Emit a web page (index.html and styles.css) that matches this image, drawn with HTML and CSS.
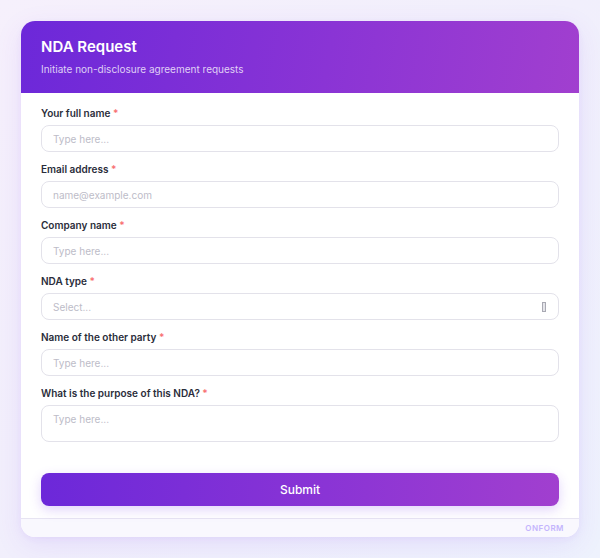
FILE: index.html
```html
<!DOCTYPE html>
<html>
<head>
<meta charset="utf-8">
<link rel="stylesheet" href="styles.css">
</head>
<body>
<div class="card">
  <div class="header">
    <div class="title">NDA Request</div>
    <div class="subtitle">Initiate non-disclosure agreement requests</div>
  </div>
  <form class="body">
    <div class="field">
      <label class="label">Your full name <span class="req">*</span></label>
      <input class="input" type="text" placeholder="Type here...">
    </div>
    <div class="field">
      <label class="label">Email address <span class="req">*</span></label>
      <input class="input" type="text" placeholder="name@example.com">
    </div>
    <div class="field">
      <label class="label">Company name <span class="req">*</span></label>
      <input class="input" type="text" placeholder="Type here...">
    </div>
    <div class="field">
      <label class="label">NDA type <span class="req">*</span></label>
      <div class="input select"><span class="ph">Select...</span><span class="tofu"></span></div>
    </div>
    <div class="field">
      <label class="label">Name of the other party <span class="req">*</span></label>
      <input class="input" type="text" placeholder="Type here...">
    </div>
    <div class="field">
      <label class="label">What is the purpose of this NDA? <span class="req">*</span></label>
      <textarea class="input textarea" placeholder="Type here..."></textarea>
    </div>
    <button type="button" class="submit">Submit</button>
  </form>
  <div class="footer">ONFORM</div>
</div>
</body>
</html>
```
FILE: styles.css
```css
* { box-sizing: border-box; }
html, body { margin: 0; padding: 0; }
body {
  width: 600px;
  height: 558px;
  overflow: hidden;
  font-family: Inter, "Noto Sans", sans-serif;
  background: linear-gradient(135deg, #f6f0fc 0%, #f1effc 50%, #eef2fd 100%);
  padding-top: 21px;
}
.card {
  width: 558px;
  margin: 0 auto;
  background: #fff;
  border-radius: 14px;
  overflow: hidden;
  box-shadow: 0 8px 28px rgba(124, 58, 237, 0.10), 0 2px 6px rgba(124, 58, 237, 0.06);
}
.header {
  height: 72px;
  padding: 16px 20px 0;
  background: linear-gradient(100deg, #6c28d9 0%, #8a34d5 55%, #a13fcf 100%);
  color: #fff;
}
.title {
  font-size: 15px;
  line-height: 20px;
  font-weight: 600;
}
.subtitle {
  margin-top: 5px;
  font-size: 10px;
  line-height: 14px;
  color: rgba(255, 255, 255, 0.78);
}
.body {
  margin: 0;
  padding: 13px 20px 12px;
  display: flex;
  flex-direction: column;
  gap: 10px;
}
.field {
  display: flex;
  flex-direction: column;
  gap: 5px;
}
.label {
  font-size: 10px;
  line-height: 14px;
  font-weight: 600;
  color: #2a2d3a;
}
.req { color: #f87171; }
.input {
  width: 100%;
  height: 27px;
  border: 1.5px solid #e3e2ea;
  border-radius: 8px;
  padding: 0 11px;
  font-family: Inter, "Noto Sans", sans-serif;
  font-size: 10px;
  color: #1f2433;
  background: #fff;
  outline: none;
}
.input::placeholder, .ph { color: #bdbcc8; }
.select {
  display: flex;
  align-items: center;
  justify-content: space-between;
}
.tofu {
  width: 4px;
  height: 10px;
  border: 1px solid #a9a9b3;
  background: #e5e5ea;
  margin-right: 1px;
}
.textarea {
  height: 37px;
  padding-top: 7px;
  resize: none;
  display: block;
}
.submit {
  margin-top: 21px;
  height: 33px;
  width: 100%;
  border: none;
  border-radius: 8px;
  background: linear-gradient(90deg, #6c28d9 0%, #8a34d5 55%, #a13fcf 100%);
  color: #fff;
  font-family: Inter, "Noto Sans", sans-serif;
  font-size: 12px;
  font-weight: 500;
  box-shadow: 0 4px 12px rgba(124, 58, 237, 0.22);
}
.footer {
  height: 19px;
  border-top: 1px solid #e7e4f2;
  background: #f9f8fe;
  padding: 0 15px;
  display: flex;
  align-items: center;
  justify-content: flex-end;
  font-size: 8px;
  font-weight: 600;
  letter-spacing: 0.5px;
  color: #c4b5fd;
}
```
